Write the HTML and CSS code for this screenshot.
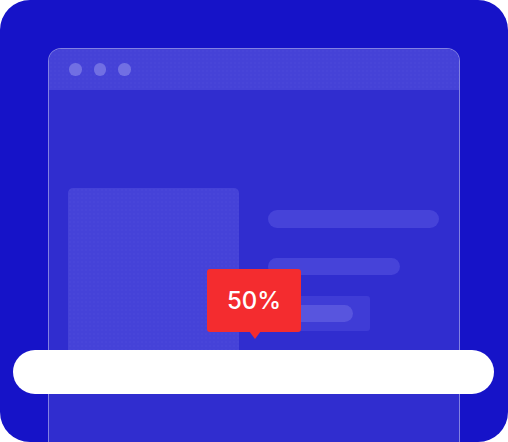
FILE: index.html
```html
<!DOCTYPE html>
<html>
<head>
<meta charset="utf-8">
<link rel="stylesheet" href="styles.css">
</head>
<body>
<div class="frame">
  <div class="window">
    <div class="titlebar">
      <span class="dot"></span><span class="dot"></span><span class="dot"></span>
    </div>
    <div class="content">
      <div class="panel"></div>
      <div class="side">
        <div class="bar bar-long"></div>
        <div class="bar bar-mid"></div>
        <div class="box"><div class="inner"></div></div>
      </div>
    </div>
  </div>
  <div class="tooltip">50%</div>
  <div class="progress"></div>
</div>
</body>
</html>
```
FILE: styles.css
```css
html, body {
  margin: 0;
  padding: 0;
  background: #ffffff;
}
.frame {
  position: relative;
  width: 508px;
  height: 442px;
  border-radius: 30px;
  background: #1613C8;
  overflow: hidden;
  padding: 48px 48px 0 48px;
  box-sizing: border-box;
  font-family: "Inter", "Liberation Sans", sans-serif;
}
.window {
  height: 420px;
  border: 1px solid rgba(255, 255, 255, 0.4);
  border-radius: 13px;
  background: #302DCF;
  overflow: hidden;
}
.titlebar {
  height: 41px;
  box-sizing: border-box;
  display: flex;
  align-items: center;
  gap: 12px;
  padding-left: 20px;
  background-color: #4542D7;
  background-image: radial-gradient(rgba(255,255,255,0.035) 0.6px, transparent 0.8px);
  background-size: 4px 4px;
}
.dot {
  width: 12.5px;
  height: 12.5px;
  border-radius: 50%;
  background: #716FE3;
}
.content {
  display: grid;
  grid-template-columns: 171px 171px;
  column-gap: 29px;
  padding: 98px 20px 0 19px;
}
.panel {
  height: 185px;
  border-radius: 5px;
  background-color: #4542D8;
  background-image: radial-gradient(rgba(255,255,255,0.035) 0.6px, transparent 0.8px);
  background-size: 4px 4px;
}
.side {
  display: flex;
  flex-direction: column;
  align-items: flex-start;
}
.bar {
  border-radius: 9px;
  background-color: #4643D9;
}
.bar-long {
  width: 171px;
  height: 18px;
  margin-top: 22px;
}
.bar-mid {
  width: 132px;
  height: 17px;
  margin-top: 30px;
}
.box {
  width: 102px;
  height: 35px;
  margin-top: 21px;
  box-sizing: border-box;
  padding: 9px 17px 0 12px;
  border-radius: 3px;
  background: #3F3CD6;
}
.inner {
  height: 17px;
  border-radius: 9px;
  background: #5855DE;
}
.tooltip {
  position: absolute;
  left: 207px;
  top: 269px;
  width: 94px;
  height: 63px;
  border-radius: 3px;
  background: #F42C2F;
  color: #ffffff;
  font-size: 24px;
  font-weight: 500;
  display: flex;
  align-items: center;
  justify-content: center;
}
.tooltip::after {
  content: "";
  position: absolute;
  left: 42px;
  bottom: -7px;
  width: 0;
  height: 0;
  border-left: 6px solid transparent;
  border-right: 6px solid transparent;
  border-top: 8px solid #F42C2F;
}
.progress {
  position: absolute;
  left: 13px;
  top: 350px;
  width: 481px;
  height: 44px;
  border-radius: 22px;
  background: #ffffff;
}
```
